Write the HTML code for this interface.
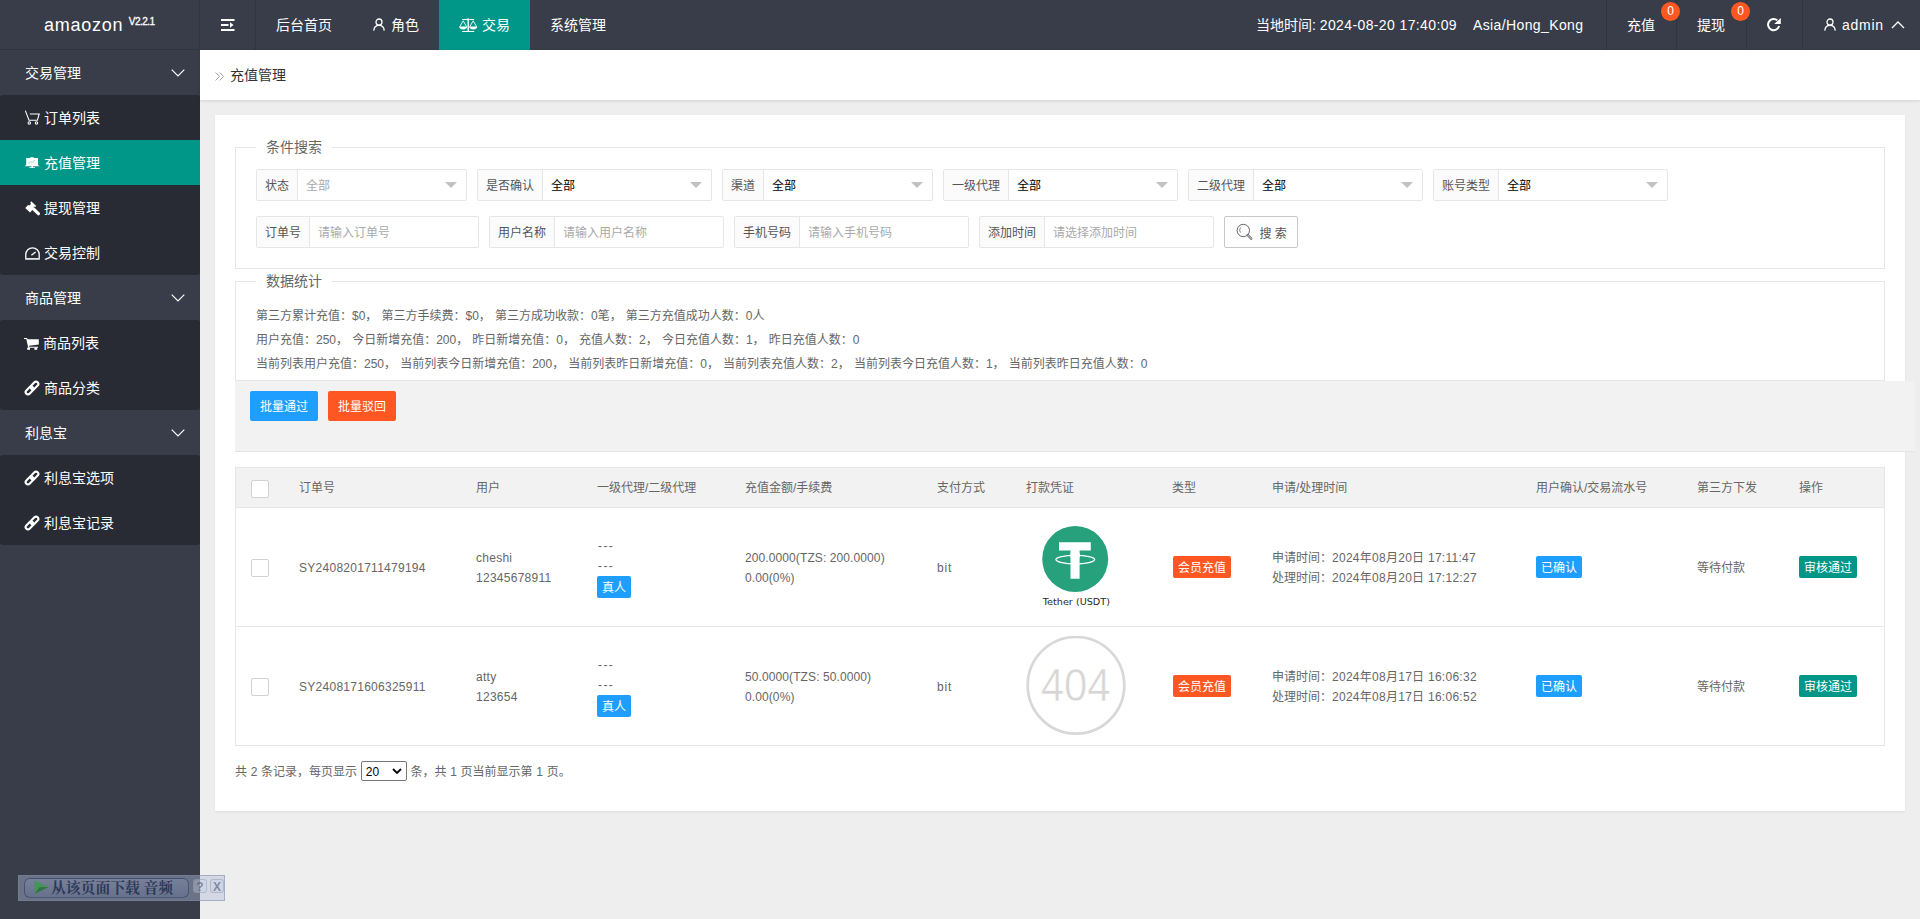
<!DOCTYPE html>
<html lang="zh-CN">
<head>
<meta charset="utf-8">
<title>充值管理</title>
<style>
*{box-sizing:border-box;margin:0;padding:0}
html,body{width:1920px;height:919px;overflow:hidden}
body{font-family:"Liberation Sans","Noto Sans CJK SC",sans-serif;font-size:14px;color:#333;background:#eeeeee;position:relative}
svg{display:block}
.abs{position:absolute}
/* header */
#hdr{position:absolute;left:0;top:0;width:1920px;height:50px;background:#393d49;color:#fff}
#logo{position:absolute;left:0;top:0;width:200px;height:50px;border-bottom:1px solid #32353f;border-right:1px solid #32353f}
#logo .nm{position:absolute;left:44px;top:12px;font-size:18px;line-height:26px;color:#fff;letter-spacing:.75px}
#logo sup{position:absolute;left:128.800px;top:15.500px;font-size:10px;line-height:12px;font-weight:normal;-webkit-text-stroke:.3px #fff;color:#fff;letter-spacing:-.55px}
.hnav{position:absolute;top:0;height:50px;line-height:50px;font-size:14px;color:#fff;white-space:nowrap}
.hnav.act{background:#009688}
.vline{position:absolute;top:0;width:1px;height:50px;background:#32353f}
.bdg{z-index:2;position:absolute;top:2px;width:19px;height:19px;border-radius:10px;background:#ff5722;color:#fff;font-size:12px;line-height:19px;text-align:center}
.lat{letter-spacing:.38px}
#tz{letter-spacing:.38px}
#adm{letter-spacing:.75px}
/* sidebar */
#side{position:absolute;left:0;top:50px;width:200px;height:869px;background:#393d49}
.grp{position:absolute;left:0;width:200px;height:45px;line-height:47px;color:#fff;font-size:14px;padding-left:25px}
.sub{position:absolute;left:0;width:200px;background:#282b33;border-radius:3px}
.it{position:relative;height:45px;line-height:47px;color:#fff;font-size:14px;padding-left:44px;white-space:nowrap}
.it.act{background:#009688}
.it svg{position:absolute;left:25px;top:16px}
.chev{position:absolute;left:171px;top:18.900px}
/* content */
#crumb{position:absolute;left:200px;top:50px;width:1720px;height:50px;background:#fff;box-shadow:0 1px 3px rgba(0,0,0,.12)}
#crumb .t{position:absolute;left:30px;top:0;line-height:50px;font-size:14px;color:#333}
#card{position:absolute;left:215px;top:115px;width:1690px;height:696px;background:#fff;box-shadow:0 1px 2px rgba(0,0,0,.08)}

/* form */
.fs{position:absolute;left:235px;width:1650px;border:1px solid #e6e6e6}
.lg{position:absolute;left:256px;height:20px;line-height:20px;padding:0 10px;background:#fff;font-size:14px;color:#666;white-space:nowrap}
.fld{position:absolute;height:32px;border:1px solid #e6e6e6;border-radius:2px;background:#fff;font-size:12px;line-height:32px;white-space:nowrap}
.fld .lb{position:absolute;left:0;top:0;height:30px;overflow:hidden;background:#fbfbfb;border-right:1px solid #e6e6e6;color:#555;padding-left:8px}
.fld .v{position:absolute;top:0;height:30px;color:#000;padding-left:8px}
.fld .v.ph{color:#a9a9a9}
.fld .tri{position:absolute;right:9px;top:12px;width:0;height:0;border:6px solid transparent;border-top-color:#c2c2c2;border-bottom-width:0}
.st{position:absolute;left:256px;margin-top:1px;font-size:12px;line-height:24px;color:#666;white-space:nowrap;word-spacing:.8px}
#tb{position:absolute;left:235px;top:381px;width:1680px;height:71px;background:#f2f2f2;border-bottom:1px solid #e6e6e6}
.btn{position:absolute;top:391px;height:30px;width:68px;line-height:32px;overflow:hidden;text-align:center;color:#fff;font-size:12px;border-radius:2px}

/* table */
#tbl{position:absolute;left:235px;top:467px;width:1650px;height:279px;border:1px solid #e6e6e6;background:#fff}
#th{position:absolute;left:235px;top:467px;width:1650px;height:41px;background:#f2f2f2;border:1px solid #e6e6e6}
.rl{position:absolute;left:235px;width:1650px;height:1px;background:#e6e6e6}
.c{position:absolute;margin-top:1px;font-size:12px;line-height:20px;color:#666;white-space:nowrap}
.n{letter-spacing:.27px}
.ck{position:absolute;left:251px;width:18px;height:18px;border:1px solid #d2d2d2;border-radius:2px;background:#fff}
.bg{position:absolute;height:22px;line-height:24px;overflow:hidden;padding:0 5px;border-radius:2px;color:#fff;font-size:12px;white-space:nowrap}
#pg{position:absolute;left:235px;top:762px;word-spacing:.37px;font-size:12px;line-height:20px;color:#666;white-space:nowrap}
#psel{display:inline-block;position:relative;width:46px;height:20px;border:1px solid #767676;border-radius:2px;background:#fff;color:#000;vertical-align:middle;line-height:20px;padding-left:4px;margin-top:-3px}
#psel svg{position:absolute;right:4px;top:6px}

/* idm */
#idm{position:absolute;left:18px;top:875px;width:207px;height:26px;background:rgba(176,188,216,.43);border:1px solid rgba(120,132,160,.5)}
#idm .b{position:absolute;left:5px;top:2px;width:165px;height:20px;border:1px solid rgba(40,52,90,.55);border-radius:6px;background:linear-gradient(rgba(150,168,210,.25),rgba(90,108,160,.25))}
#idm .t{position:absolute;left:32px;top:1px;font-family:"Liberation Serif","Noto Serif CJK SC",serif;font-weight:bold;font-size:14.800px;line-height:22px;color:rgba(36,46,78,.88);white-space:nowrap}
#idm .q{position:absolute;top:3px;width:14px;height:14px;border-radius:3px;font-size:12px;line-height:14px;text-align:center;font-weight:bold;color:rgba(60,70,100,.55);background:rgba(200,210,230,.35);border:1px solid rgba(120,132,160,.35)}
</style>
</head>
<body>
<div id="hdr">
  <div id="logo"><span class="nm">amaozon</span><sup>V2.2.1</sup></div>
  <div class="vline" style="left:255px"></div>
  <svg class="abs" style="left:221px;top:19px" width="14" height="12" viewBox="0 0 14 12"><path d="M0 0h13.5v2H0zM0 5h7.5v2H0zM0 10h13.5v2H0zM9 3.2l3.5 2.8L9 8.8z" fill="#fff"/></svg>
  <div class="hnav" style="left:256px;width:96px;padding-left:20px">后台首页</div>
  <div class="hnav" style="left:352px;width:87px;padding-left:39px">角色</div>
  <svg class="abs" style="left:373px;top:18px" width="12" height="13" viewBox="0 0 12 13"><circle cx="6" cy="4" r="3" fill="none" stroke="#fff" stroke-width="1.3"/><path d="M.8 12.6C1 9.4 3 7.4 6 7.4s5 2 5.2 5.200" fill="none" stroke="#fff" stroke-width="1.3"/></svg>
  <div class="hnav act" style="left:439px;width:91px;padding-left:43px">交易</div>
  <svg class="abs" id="scale" style="left:458.500px;top:18px" width="19" height="15" viewBox="0 0 19 15"><g fill="none" stroke="#fff" stroke-width="1"><path d="M3.200 1.500h12M3.200 13.500h12"/><path d="M9.200 .5v13" stroke-width="1.400"/><path d="M.8 8.600L4.200 2.800l3.400 5.800M10.800 8.600l3.400-5.800 3.400 5.800" stroke-width=".9"/></g><path d="M.2 8.600h8a4 2.800 0 01-8 0zM10.200 8.600h8a4 2.800 0 01-8 0z" fill="#fff"/><circle cx="9.200" cy="1.500" r="1.100" fill="#fff"/></svg>
  <div class="hnav" style="left:530px;width:96px;padding-left:20px">系统管理</div>

  <div class="hnav" id="ltime" style="left:1256px">当地时间: <span class="lat">2024-08-20 17:40:09</span></div>
  <div class="hnav" id="tz" style="left:1473px">Asia/Hong_Kong</div>
  <div class="vline" style="left:1606px"></div>
  <div class="hnav" style="left:1627px">充值</div>
  <div class="bdg" style="left:1661px">0</div>
  <div class="vline" style="left:1676px"></div>
  <div class="hnav" style="left:1697px">提现</div>
  <div class="bdg" style="left:1731px">0</div>
  <div class="vline" style="left:1746px"></div>
  <svg class="abs" id="refresh" style="left:1766px;top:17px" width="16" height="16" viewBox="0 0 16 16"><path d="M13.100 9.100A5.600 5.600 0 1 1 11.300 3.300" fill="none" stroke="#fff" stroke-width="2"/><path d="M14.800 1v5.900H8.200z" fill="#fff"/></svg>
  <div class="vline" style="left:1802px"></div>
  <svg class="abs" style="left:1824px;top:18px" width="12" height="13" viewBox="0 0 12 13"><circle cx="6" cy="4" r="3" fill="none" stroke="#fff" stroke-width="1.3"/><path d="M.8 12.6C1 9.4 3 7.4 6 7.4s5 2 5.2 5.200" fill="none" stroke="#fff" stroke-width="1.3"/></svg>
  <div class="hnav" id="adm" style="left:1842px">admin</div>
  <svg class="abs" style="left:1891px;top:21px" width="14" height="8" viewBox="0 0 14 8"><path d="M1 7l6-6 6 6" fill="none" stroke="#fff" stroke-width="1.3"/></svg>
</div>
<div id="side">
  <div class="grp" style="top:0">交易管理<svg class="chev" width="14" height="8" viewBox="0 0 14 8"><path d="M.7 .7l6.300 6.300 6.300-6.300" fill="none" stroke="#fff" stroke-width="1.150"/></svg></div>
  <div class="sub" style="top:45px">
    <div class="it"><svg style="top:15px" width="15" height="15" viewBox="0 0 15 15"><g fill="none" stroke="#fff" stroke-width="1.1"><path d="M.3 .6L4 10.300h8.300L14.200 4H4.800"/><circle cx="4.300" cy="13" r="1.200"/><circle cx="11.500" cy="13" r="1.200"/></g></svg>订单列表</div>
    <div class="it act"><svg style="top:17px" width="15" height="12" viewBox="0 0 15 12"><path d="M5.300 .2h3.400v.8H13v7.400h1.200v.9H8v1h2v.8H4.400v-.8h2v-1H-.2v-.9h1.400V1h4.100z" fill="#fff"/><path d="M3.500 6.200l2-1.400 1.700.5L10 3" fill="none" stroke="#7fcac3" stroke-width=".7"/></svg>充值管理</div>
    <div class="it"><svg style="top:15.600px" width="15" height="15" viewBox="0 0 15 15"><path d="M6.200 .3l5 4.600-1 1.200-1.200-.6-1.600 1.600 .5 1.300-2.900 3.100L.2 7.100l2.900-3 1.300.4L6 2.900l-.7-1.300z" fill="#fff"/><path d="M8.200 7.600l5.200 5.100" stroke="#fff" stroke-width="3.200" stroke-linecap="round" fill="none"/></svg>提现管理</div>
    <div class="it"><svg style="top:16.600px" width="15" height="13" viewBox="0 0 15 13"><path d="M.8 11.500V7.400a6.700 6.500 0 0113.400 0v4.100" fill="none" stroke="#fff" stroke-width="1.300"/><path d="M.15 11h14.700v1.800H.15z" fill="#e4e4e6"/><path d="M6.400 8.300l4.200-3.300" stroke="#fff" stroke-width="1.400" fill="none"/></svg>交易控制</div>
  </div>
  <div class="grp" style="top:225px">商品管理<svg class="chev" width="14" height="8" viewBox="0 0 14 8"><path d="M.7 .7l6.300 6.300 6.300-6.300" fill="none" stroke="#fff" stroke-width="1.150"/></svg></div>
  <div class="sub" style="top:270px">
    <div class="it" style="padding-left:43px"><svg style="left:24px;top:18px" width="15" height="12" viewBox="0 0 15 12"><path d="M0 0h3l.6 1.300h11.200v5.300L5 7.800l.3 1H14v1H4.200L2.300 1H0z" fill="#fff"/><rect x="3.200" y="9.600" width="2.800" height="2.200" fill="#fff"/><rect x="10.400" y="9.600" width="2.800" height="2.200" fill="#fff"/></svg>商品列表</div>
    <div class="it"><svg style="left:24px;top:15px" width="16" height="16" viewBox="0 0 16 16"><g fill="none" stroke="#fff" stroke-width="2.100" transform="rotate(-45 8 8)"><rect x="0" y="5.700" width="9" height="4.600" rx="2.300"/><rect x="7" y="5.700" width="9" height="4.600" rx="2.300"/></g></svg>商品分类</div>
  </div>
  <div class="grp" style="top:360px">利息宝<svg class="chev" width="14" height="8" viewBox="0 0 14 8"><path d="M.7 .7l6.300 6.300 6.300-6.300" fill="none" stroke="#fff" stroke-width="1.150"/></svg></div>
  <div class="sub" style="top:405px">
    <div class="it"><svg style="left:24px;top:15px" width="16" height="16" viewBox="0 0 16 16"><g fill="none" stroke="#fff" stroke-width="2.100" transform="rotate(-45 8 8)"><rect x="0" y="5.700" width="9" height="4.600" rx="2.300"/><rect x="7" y="5.700" width="9" height="4.600" rx="2.300"/></g></svg>利息宝选项</div>
    <div class="it"><svg style="left:24px;top:15px" width="16" height="16" viewBox="0 0 16 16"><g fill="none" stroke="#fff" stroke-width="2.100" transform="rotate(-45 8 8)"><rect x="0" y="5.700" width="9" height="4.600" rx="2.300"/><rect x="7" y="5.700" width="9" height="4.600" rx="2.300"/></g></svg>利息宝记录</div>
  </div>
</div>
<div id="crumb"><svg class="abs" style="left:15px;top:22px" width="10" height="9" viewBox="0 0 10 9"><path d="M.6 .4l4 4-4 4M4.600 .4l4 4-4 4" fill="none" stroke="#a0a0a0" stroke-width="1"/></svg><span class="t">充值管理</span></div>
<div id="card"></div>
<div class="fs" style="top:147px;height:122px"></div>
<div class="lg" style="top:137px">条件搜索</div>
<div class="fld" style="left:256px;top:169px;width:211px"><span class="lb" style="width:41px">状态</span><span class="v ph" style="left:41px">全部</span><i class="tri"></i></div>
<div class="fld" style="left:477px;top:169px;width:235px"><span class="lb" style="width:65px">是否确认</span><span class="v" style="left:65px">全部</span><i class="tri"></i></div>
<div class="fld" style="left:722px;top:169px;width:211px"><span class="lb" style="width:41px">渠道</span><span class="v" style="left:41px">全部</span><i class="tri"></i></div>
<div class="fld" style="left:943px;top:169px;width:235px"><span class="lb" style="width:65px">一级代理</span><span class="v" style="left:65px">全部</span><i class="tri"></i></div>
<div class="fld" style="left:1188px;top:169px;width:235px"><span class="lb" style="width:65px">二级代理</span><span class="v" style="left:65px">全部</span><i class="tri"></i></div>
<div class="fld" style="left:1433px;top:169px;width:235px"><span class="lb" style="width:65px">账号类型</span><span class="v" style="left:65px">全部</span><i class="tri"></i></div>
<div class="fld" style="left:256px;top:216px;width:223px"><span class="lb" style="width:53px">订单号</span><span class="v ph" style="left:53px">请输入订单号</span></div>
<div class="fld" style="left:489px;top:216px;width:235px"><span class="lb" style="width:65px">用户名称</span><span class="v ph" style="left:65px">请输入用户名称</span></div>
<div class="fld" style="left:734px;top:216px;width:235px"><span class="lb" style="width:65px">手机号码</span><span class="v ph" style="left:65px">请输入手机号码</span></div>
<div class="fld" style="left:979px;top:216px;width:235px"><span class="lb" style="width:65px">添加时间</span><span class="v ph" style="left:65px">请选择添加时间</span></div>
<div class="fld" id="sbtn" style="left:1224px;top:216px;width:74px;border-color:#c9c9c9;color:#555">
  <svg class="abs" style="left:9.500px;top:6.200px" width="20" height="18" viewBox="0 0 20 18"><g fill="none" stroke="#666" stroke-width="1"><circle cx="8.300" cy="7.500" r="6.200"/><path d="M12.600 12l3.600 3.600" stroke-width="2.400" stroke-linecap="round"/><path d="M12.600 12l3.600 3.600" stroke="#fff" stroke-width=".8" stroke-linecap="round"/><path d="M5.600 4.600a3.800 3.800 0 000 5" stroke-width=".8"/></g></svg>
  <span class="abs" style="left:34.500px;top:.6px">搜 索</span>
</div>
<div class="fs" style="top:281px;height:100px"></div>
<div class="lg" style="top:271px">数据统计</div>
<div class="st" style="top:303px">第三方累计充值：$0， 第三方手续费：$0， 第三方成功收款：0笔， 第三方充值成功人数：0人</div>
<div class="st" style="top:327px">用户充值：250， 今日新增充值：200， 昨日新增充值：0， 充值人数：2， 今日充值人数：1， 昨日充值人数：0</div>
<div class="st" style="top:351px">当前列表用户充值：250， 当前列表今日新增充值：200， 当前列表昨日新增充值：0， 当前列表充值人数：2， 当前列表今日充值人数：1， 当前列表昨日充值人数：0</div>
<div id="tb"></div>
<div class="btn" style="left:250px;background:#1e9fff">批量通过</div>
<div class="btn" style="left:328px;background:#ff5722">批量驳回</div>
<div id="tbl"></div>
<div id="th"></div>
<div class="ck" style="top:480px"></div>
<div class="c" style="left:299px;top:477px">订单号</div>
<div class="c" style="left:476px;top:477px">用户</div>
<div class="c" style="left:597px;top:477px">一级代理/二级代理</div>
<div class="c" style="left:745px;top:477px">充值金额/手续费</div>
<div class="c" style="left:937px;top:477px">支付方式</div>
<div class="c" style="left:1026px;top:477px">打款凭证</div>
<div class="c" style="left:1172px;top:477px">类型</div>
<div class="c" style="left:1272px;top:477px">申请/处理时间</div>
<div class="c" style="left:1536px;top:477px">用户确认/交易流水号</div>
<div class="c" style="left:1697px;top:477px">第三方下发</div>
<div class="c" style="left:1799px;top:477px">操作</div>
<div class="rl" style="top:626px"></div>
<div class="ck" style="top:559px"></div>
<div class="c n" style="left:299px;top:557px">SY2408201711479194</div>
<div class="c" style="left:476px;top:547px"><span class="n">cheshi</span><br><span class="n">12345678911</span></div>
<div class="c" style="left:597px;top:536px"><span style="letter-spacing:1.400px;position:relative;left:1px;top:-1.200px">---<br>---</span></div>
<div class="bg" style="left:597px;top:576px;background:#1e9fff">真人</div>
<div class="c" style="letter-spacing:.1px;left:745px;top:547px">200.0000(TZS: 200.0000)<br>0.00(0%)</div>
<div class="c" style="left:937px;top:557px;letter-spacing:.85px">bit</div>
<svg class="abs" style="left:1026px;top:517px" width="100" height="100" viewBox="0 0 100 100"><circle cx="49.200" cy="42" r="33" fill="#26a17b"/><path d="M33 25.300h31.800v8.100H53.600v28.400h-9.100V33.400H33z" fill="#fff"/><ellipse cx="49.300" cy="42.600" rx="19.400" ry="4.300" fill="none" stroke="#fff" stroke-width="1.300"/><rect x="44.500" y="36" width="9.100" height="4.600" fill="#fff"/><text x="50.400" y="88.200" text-anchor="middle" font-family="'DejaVu Sans','Liberation Sans',sans-serif" font-size="8.800" fill="#2a2a2a" textLength="67.200" lengthAdjust="spacingAndGlyphs">Tether (USDT)</text></svg>
<div class="bg" style="left:1173px;top:556px;background:#ff5722">会员充值</div>
<div class="c" style="left:1272px;top:547px">申请时间：<span class="n">2024年08月20日 17:11:47</span><br>处理时间：<span class="n">2024年08月20日 17:12:27</span></div>
<div class="bg" style="left:1536px;top:556px;background:#1e9fff">已确认</div>
<div class="c" style="left:1697px;top:557px">等待付款</div>
<div class="bg" style="left:1799px;top:556px;background:#009688">审核通过</div>
<div class="ck" style="top:678px"></div>
<div class="c n" style="left:299px;top:676px">SY2408171606325911</div>
<div class="c" style="left:476px;top:666px"><span class="n">atty</span><br><span class="n">123654</span></div>
<div class="c" style="left:597px;top:655px"><span style="letter-spacing:1.400px;position:relative;left:1px;top:-1.200px">---<br>---</span></div>
<div class="bg" style="left:597px;top:695px;background:#1e9fff">真人</div>
<div class="c" style="letter-spacing:.1px;left:745px;top:666px">50.0000(TZS: 50.0000)<br>0.00(0%)</div>
<div class="c" style="left:937px;top:676px;letter-spacing:.85px">bit</div>
<svg class="abs" style="left:1026px;top:636px" width="100" height="100" viewBox="0 0 100 100"><circle cx="50" cy="49.300" r="48.300" fill="none" stroke="#dad7d7" stroke-width="2.700"/><text x="49.700" y="64.800" text-anchor="middle" font-family="'Liberation Sans',sans-serif" font-size="46" fill="#d8d5d5" stroke="#fff" stroke-width=".6" textLength="70" lengthAdjust="spacingAndGlyphs">404</text></svg>
<div class="bg" style="left:1173px;top:675px;background:#ff5722">会员充值</div>
<div class="c" style="left:1272px;top:666px">申请时间：<span class="n">2024年08月17日 16:06:32</span><br>处理时间：<span class="n">2024年08月17日 16:06:52</span></div>
<div class="bg" style="left:1536px;top:675px;background:#1e9fff">已确认</div>
<div class="c" style="left:1697px;top:676px">等待付款</div>
<div class="bg" style="left:1799px;top:675px;background:#009688">审核通过</div>
<div id="pg">共 2 条记录，每页显示 <span id="psel">20<svg width="10" height="7" viewBox="0 0 10 7"><path d="M1 1l4 4 4-4" fill="none" stroke="#000" stroke-width="1.800"/></svg></span> 条，共 1 页当前显示第 1 页。</div>
<div id="idm"><div class="b"></div><svg class="abs" style="left:15px;top:4px" width="15" height="15" viewBox="0 0 15 15"><path d="M.5 .5l14 6.500-14 7z" fill="#3c9a4c" fill-opacity=".85"/><path d="M.5 14l5-6.800 9-.2z" fill="#2a5a3a" fill-opacity=".6"/></svg><span class="t">从该页面下载 音频</span><span class="q" style="left:174px">?</span><span class="q" style="left:191px">X</span></div>
</body>
</html>
